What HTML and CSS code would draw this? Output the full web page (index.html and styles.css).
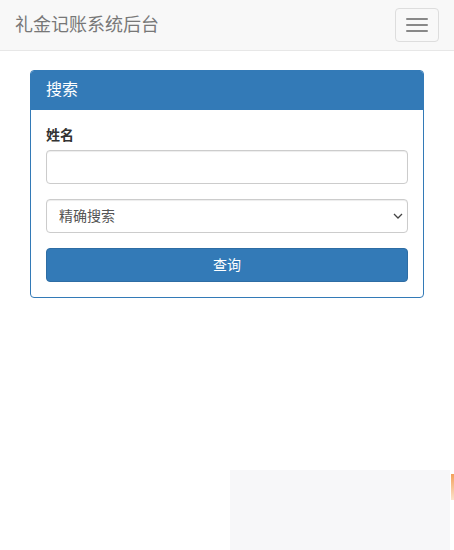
FILE: index.html
```html
<!DOCTYPE html>
<html lang="zh-CN">
<head>
<meta charset="utf-8">
<title>礼金记账系统后台</title>
<link rel="stylesheet" href="styles.css">
</head>
<body>
<nav class="navbar">
  <a class="brand" href="#">礼金记账系统后台</a>
  <button class="toggle" type="button"><span class="bar"></span><span class="bar"></span><span class="bar"></span></button>
</nav>
<main class="container">
  <section class="panel">
    <div class="panel-heading">搜索</div>
    <form class="panel-body">
      <div class="form-group">
        <label class="label" for="name">姓名</label>
        <input id="name" class="control" type="text">
      </div>
      <div class="form-group">
        <div class="select-wrap">
          <select class="control select">
            <option>精确搜索</option>
            <option>模糊搜索</option>
          </select>
          <svg class="chev" width="10" height="6" viewBox="0 0 10 6"><path d="M1 1l4 4 4-4" fill="none" stroke="#444" stroke-width="1.3"/></svg>
        </div>
      </div>
      <button class="btn" type="button">查询</button>
    </form>
  </section>
</main>
<div class="overlay"></div>
<div class="edge"></div>
</body>
</html>
```
FILE: styles.css
```css
* { box-sizing: border-box; }
html, body { margin: 0; padding: 0; }
body {
  font-family: "Liberation Sans", Arial, "Noto Sans CJK SC", sans-serif;
  font-size: 14px;
  line-height: 20px;
  color: #333;
  background: #fff;
  width: 454px;
  height: 550px;
  overflow: hidden;
  position: relative;
}
.navbar {
  height: 51px;
  background: #f8f8f8;
  border-bottom: 1px solid #e7e7e7;
  display: flex;
  align-items: center;
  justify-content: space-between;
  padding: 0 15px;
}
.brand {
  font-size: 18px;
  line-height: 20px;
  color: #777;
  text-decoration: none;
}
.toggle {
  width: 44px;
  height: 34px;
  border: 1px solid #ddd;
  border-radius: 4px;
  background: transparent;
  padding: 0;
  display: flex;
  flex-direction: column;
  align-items: center;
  justify-content: center;
  gap: 4px;
  margin-top: -1px;
}
.bar {
  display: block;
  width: 22px;
  height: 2px;
  background: #888;
  border-radius: 1px;
}
.container {
  padding: 19px 30px 0;
}
.panel {
  border: 1px solid #337ab7;
  border-radius: 4px;
  background: #fff;
}
.panel-heading {
  background: #337ab7;
  color: #fff;
  font-size: 16px;
  line-height: 18px;
  padding: 10px 15px;
  border-bottom: 1px solid #337ab7;
  border-radius: 3px 3px 0 0;
}
.panel-body {
  padding: 15px;
  margin: 0;
}
.form-group { margin-bottom: 15px; }
.label {
  display: block;
  font-weight: bold;
  margin-bottom: 5px;
}
.control {
  display: block;
  width: 100%;
  height: 34px;
  padding: 6px 12px;
  font: inherit;
  color: #555;
  background: #fff;
  border: 1px solid #ccc;
  border-radius: 4px;
  box-shadow: inset 0 1px 1px rgba(0,0,0,.075);
}
.select-wrap { position: relative; }
.select {
  appearance: none;
  -webkit-appearance: none;
}
.chev {
  position: absolute;
  right: 5px;
  top: 14px;
  pointer-events: none;
}
.btn {
  display: block;
  width: 100%;
  height: 34px;
  font: inherit;
  color: #fff;
  background: #337ab7;
  border: 1px solid #2e6da4;
  border-radius: 4px;
}
.overlay {
  position: absolute;
  left: 230px;
  top: 470px;
  width: 220px;
  height: 80px;
  background: #f7f7f9;
}
.edge {
  position: absolute;
  left: 451px;
  top: 474px;
  width: 3px;
  height: 26px;
  background: linear-gradient(#f3a05a, #fbe3cc);
}
```
